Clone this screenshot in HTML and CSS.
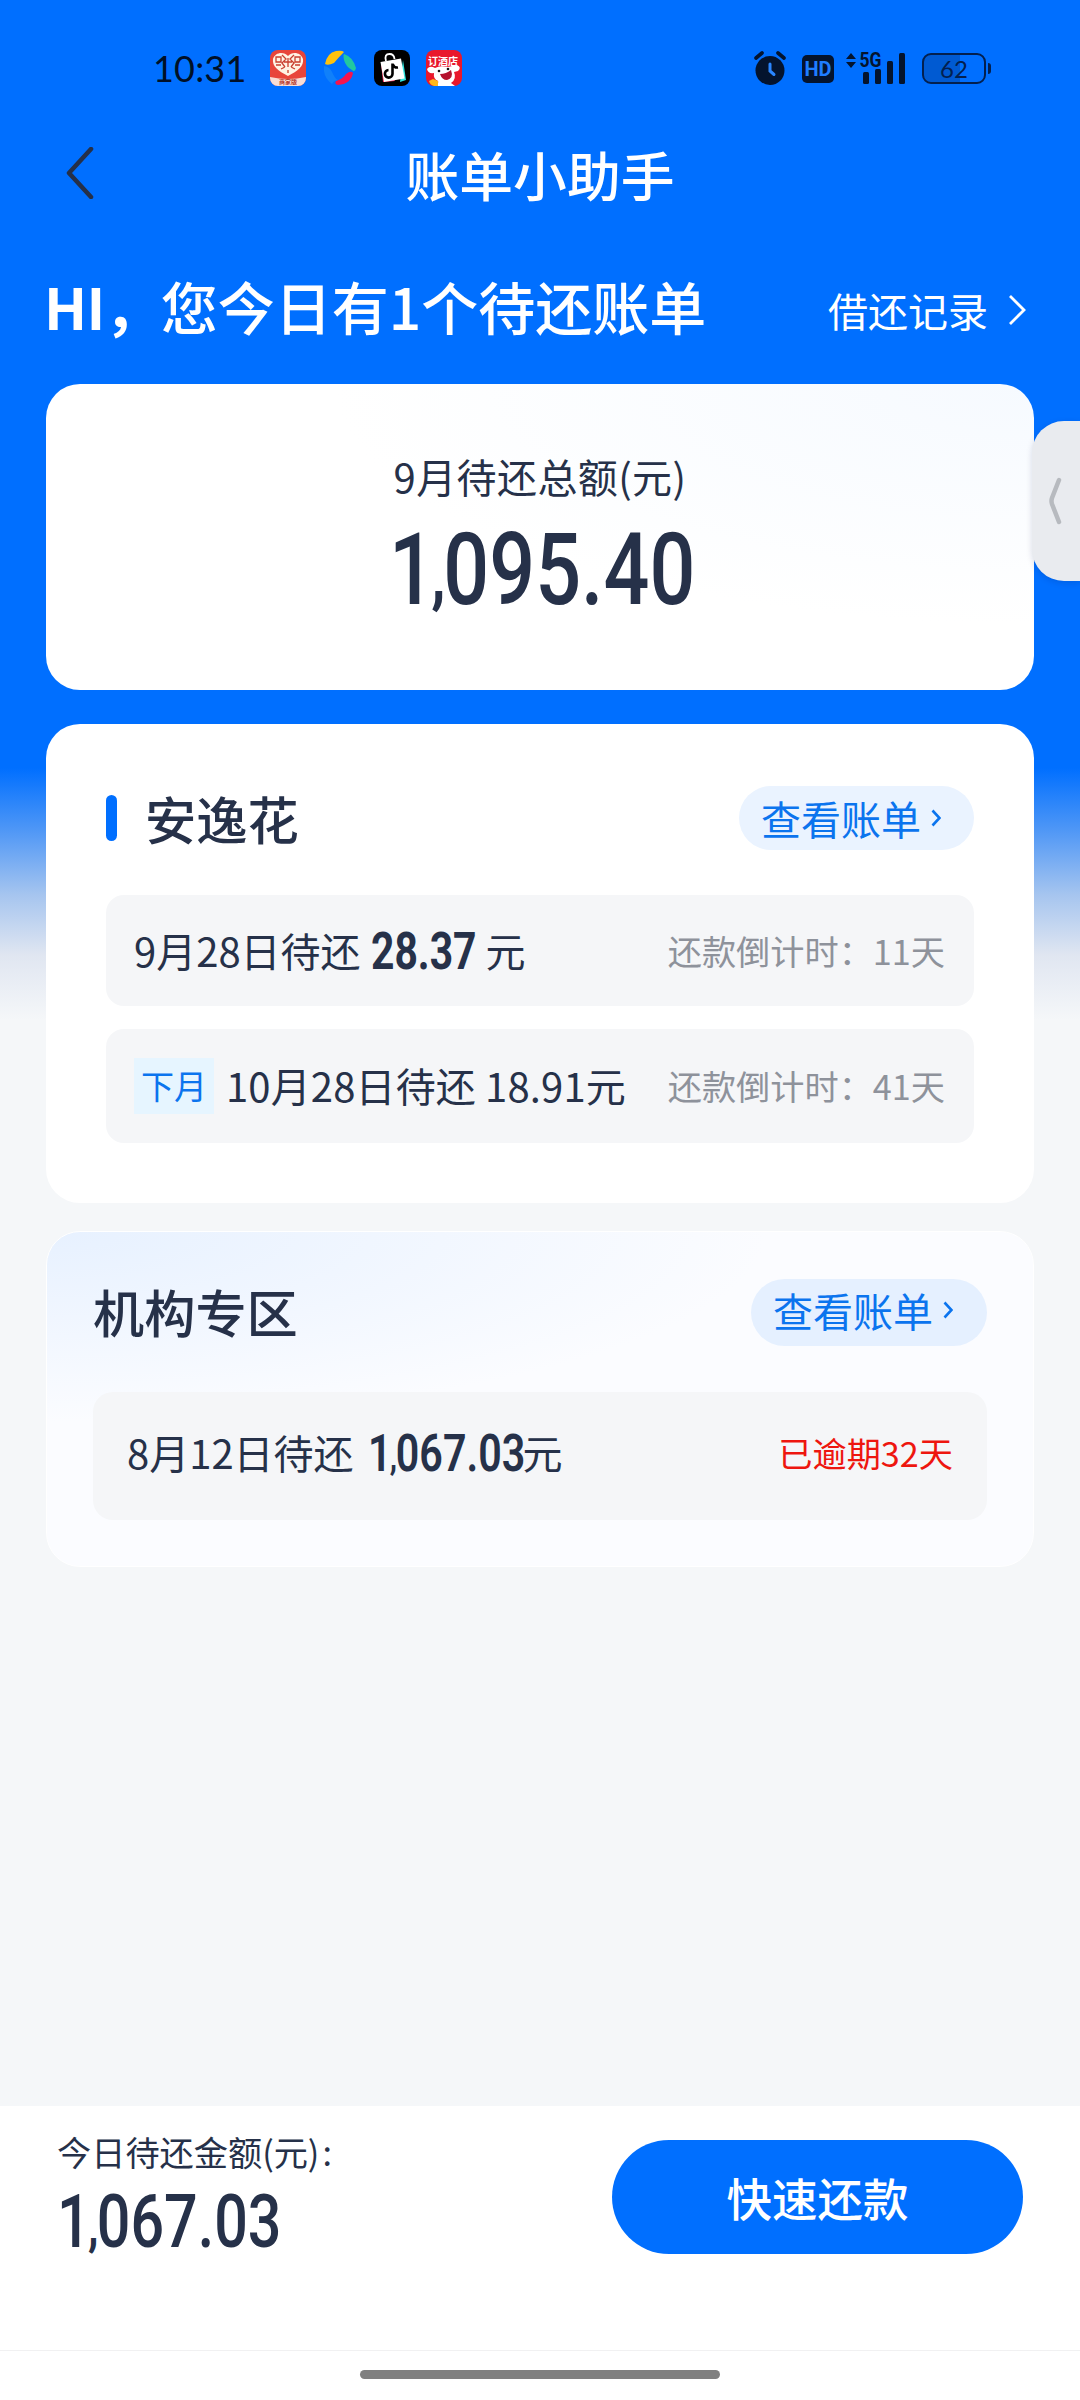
FILE: index.html
```html
<!DOCTYPE html>
<html lang="zh-CN">
<head>
<meta charset="utf-8">
<title>账单小助手</title>
<link rel="stylesheet" href="styles.css">
</head>
<body>
<div class="screen">
  <div class="status">
    <span class="time">10:31</span>
    <div class="apps">
      <svg class="app" viewBox="0 0 36 36"><rect width="36" height="36" rx="8" fill="#e8453a"/><path d="M18 26C8 21 2 16 3 9C5 2 14 1 18 6C22 1 31 2 33 9C34 16 28 21 18 26Z" fill="#fff3e4"/><path d="M6 7h5v5H6zM25 7h5v5h-5zM12 5l4 4-4 4 3 4M24 5l-4 4 4 4-3 4M14 12h8M18 8v9M6 15h5M25 15h5M11 19l4-2M25 19l-4-2M18 20v3" stroke="#c9402f" stroke-width="1.300" fill="none"/><path d="M0 27Q18 31 36 27V28a8 8 0 0 1-8 8H8a8 8 0 0 1-8-8Z" fill="#f8ddd5"/><text x="18" y="34.300" text-anchor="middle" font-size="6" font-weight="700" fill="#b43a30">商家版</text></svg>
      <svg class="app" viewBox="0 0 36 36"><path d="M3 14Q5 3 14 1Q20 0 22 2Q16 8 12 13Q6 16 3 14Z" fill="#ffc20e"/><path d="M22 4Q31 7 34 18Q33 23 30 20Q24 17 22 10Q21 5 22 4Z" fill="#22c8a0"/><path d="M31 23Q29 34 16 35Q12 34 14 31Q21 29 24 24Q29 20 31 23Z" fill="#f5144e"/><path d="M2 16Q8 17 10 22Q13 29 16 30Q11 31 10 34Q3 29 2 21Z" fill="#1080fa"/></svg>
      <svg class="app" viewBox="0 0 36 36"><rect width="36" height="36" rx="8" fill="#000"/><path d="M29 10l3 20-6 2z" fill="#2fe6e0"/><path d="M7 13l2 19 12-1z" fill="#ff2758"/><path d="M6.500 12L27 8.500L30.500 28.500L10 32Z" fill="#fff"/><path d="M12 11Q10 4 15.500 4Q20 4 20.500 9" fill="none" stroke="#fff" stroke-width="1.800"/><path d="M18.500 13.500V24a3.800 3.800 0 1 1-4-4M18.500 14Q20 18 24 17.500" fill="none" stroke="#000" stroke-width="2.600"/></svg>
      <svg class="app" viewBox="0 0 36 36"><rect width="36" height="36" rx="8" fill="#e9182c"/><text x="17" y="15" text-anchor="middle" font-size="10" font-weight="700" fill="#fff">订酒店</text><path d="M1 19Q4 15 9 18Q14 15 22 17L31 15Q36 17 32 21L28 22Q31 29 25 33L29 36H10Q13 33 12 31Q7 29 8 23Q2 24 1 19Z" fill="#fff"/><path d="M14 24Q20 24 25 20Q28 28 21 30Q16 30 14 24Z" fill="#b5122d"/><circle cx="22" cy="19" r="1.300" fill="#111"/><circle cx="13" cy="21" r="1.300" fill="#111"/><path d="M3 31l4-2 5 2v5H8Q4 35 3 31Z" fill="#ffb81c"/></svg>
    </div>
    <div class="system">
      <svg class="alarm" viewBox="0 0 32 34"><circle cx="16" cy="19.500" r="14.500" fill="#04142e"/><path d="M2 7L8 2M30 7L24 2" stroke="#04142e" stroke-width="3.600" stroke-linecap="round"/><path d="M16 13v7l4 3.500" fill="none" stroke="#2a86ff" stroke-width="3" stroke-linecap="round"/></svg>
      <span class="hd">HD</span>
      <svg class="signal" viewBox="0 0 60 34"><path d="M0 8L5 2L10 8ZM0 11H10L5 17Z" fill="#04142e"/><text x="13.500" y="15.500" font-size="20" font-weight="700" textLength="22" lengthAdjust="spacingAndGlyphs" fill="#04142e">5G</text><rect x="17" y="21" width="6" height="12" rx="1.500" fill="#04142e"/><rect x="29" y="18" width="6" height="15" rx="1.500" fill="#04142e"/><rect x="41" y="10" width="6" height="23" rx="1.500" fill="#04142e"/><rect x="53" y="2" width="6" height="31" rx="1.500" fill="#04142e"/></svg>
      <div class="battery"><span>62</span></div>
    </div>
  </div>

  <header class="nav">
    <svg class="back" viewBox="0 0 28 52"><path d="M25 2L3 26L25 50" fill="none" stroke="#253049" stroke-width="4.500" stroke-linecap="round" stroke-linejoin="round"/></svg>
    <h1>账单小助手</h1>
  </header>

  <div class="greeting">
    <h2><span class="hi">HI，</span>您今日有1个待还账单</h2>
    <a class="history">借还记录<svg viewBox="0 0 18 32"><path d="M2 2L16 16L2 30" fill="none" stroke="#fff" stroke-width="2.800"/></svg></a>
  </div>

  <main class="cards">
    <section class="card total">
      <div class="total-label">9月待还总额(元)</div>
      <div class="num num-xl"><span><i class="one">1</i><i class="comma">,</i>095.40</span></div>
    </section>

    <section class="card bills">
      <div class="card-head">
        <h3 class="marked">安逸花</h3>
        <a class="pill">查看账单<svg viewBox="0 0 10 18"><path d="M1.500 1.500L8.500 9L1.500 16.500" fill="none" stroke="#0b74ee" stroke-width="2.600"/></svg></a>
      </div>
      <div class="row row-a">
        <span class="due">9月28日待还</span><div class="num num-a"><span>28.37</span></div><span class="due">元</span>
        <span class="left">还款倒计时：11天</span>
      </div>
      <div class="row row-b">
        <span class="tag">下月</span><span class="due due-next">10月28日待还 18.91元</span>
        <span class="left">还款倒计时：41天</span>
      </div>
    </section>

    <section class="card org">
      <div class="card-head">
        <h3>机构专区</h3>
        <a class="pill pill-org">查看账单<svg viewBox="0 0 10 18"><path d="M1.500 1.500L8.500 9L1.500 16.500" fill="none" stroke="#0b74ee" stroke-width="2.600"/></svg></a>
      </div>
      <div class="row row-c">
        <span class="due">8月12日待还</span><div class="num num-c"><span><i class="one">1</i><i class="comma">,</i>067.03</span></div><span class="due">元</span>
        <span class="left overdue">已逾期32天</span>
      </div>
    </section>
  </main>

  <footer class="pay">
    <div class="pay-sum">
      <div class="pay-label">今日待还金额(元)<span>:</span></div>
      <div class="num num-l"><span><i class="one">1</i><i class="comma">,</i>067.03</span></div>
    </div>
    <button class="pay-btn">快速还款</button>
  </footer>
  <div class="home"><div class="home-bar"></div></div>

  <div class="edge-tab"><svg viewBox="0 0 14 48"><path d="M11 3L4 21Q3 24 4 27L11 45" fill="none" stroke="#b7babf" stroke-width="4.500" stroke-linecap="round"/></svg></div>
</div>
</body>
</html>
```
FILE: styles.css
```css
* { box-sizing: border-box; margin: 0; padding: 0; }
body { font-family: "Noto Sans CJK SC", "Noto Sans", sans-serif; color: #263149; background: #f5f7f9; }
h1, h2, h3 { font-weight: 500; }
i { font-style: normal; }
svg { display: block; flex: none; }
.screen {
  position: relative; width: 1080px; height: 2400px; overflow: hidden; display: flex; flex-direction: column;
  background: linear-gradient(#006fff 768px, #4f97f6 830px, #a6c5ef 895px, #e0e6f1 955px, #f5f7f9 1020px);
  white-space: nowrap;
}
.status { height: 122px; padding: 14px 94px 0 153px; display: flex; align-items: center; }
.time { width: 117px; font-family: Lato, sans-serif; font-size: 36px; line-height: 36px; letter-spacing: .2px; color: #001027; }
.apps { display: flex; gap: 16px; }
.app { width: 36px; height: 36px; }
.system { margin-left: auto; display: flex; align-items: center; }
.alarm { width: 32px; height: 34px; }
.hd { width: 32px; height: 28px; margin: 2px 12px 0 16px; border-radius: 5px; background: #04142e; color: #1f7dff; font: 700 20px/28px Roboto, sans-serif; text-align: center; }
.signal { width: 60px; height: 34px; margin-right: 16px; font-family: Roboto, sans-serif; overflow: visible; }
.battery { position: relative; width: 64px; height: 31px; border: 2.5px solid #03204f; border-radius: 9px; background: linear-gradient(90deg, #005ad2 60%, #006fff 60%); color: #03204f; font: 24px/27px Lato, sans-serif; text-align: center; }
.battery::after { content: ""; position: absolute; right: -7px; top: 8px; width: 3px; height: 11px; border-radius: 0 3px 3px 0; background: #03204f; }
.nav { height: 108px; padding: 0 66px; display: grid; grid-template-columns: 28px 1fr 28px; align-items: center; }
.back { width: 28px; height: 52px; margin-bottom: 6px; }
.nav h1 { padding-bottom: 4px; font-size: 53.8px; line-height: 60px; color: #fff; text-align: center; }
.greeting { height: 154px; padding: 0 54px 0 44px; display: flex; align-items: center; justify-content: space-between; color: #fff; }
.greeting h2 { padding-bottom: 4px; font-size: 57px; line-height: 80px; }
.hi { letter-spacing: -.7px; font-weight: 700; }
.history { display: flex; align-items: center; gap: 20px; font-size: 40px; line-height: 56px; padding-top: 5px; }
.history svg { width: 18px; height: 32px; }
.cards { padding: 0 46px; display: flex; flex-direction: column; }
.card { border-radius: 34px; background: #fff; }
.total { height: 306px; margin-bottom: 34px; padding-top: 64px; display: flex; flex-direction: column; align-items: center; background: radial-gradient(ellipse 700px 240px at 100% 0, #f6faff, #fff); }
.total-label { font-size: 40px; line-height: 56px; letter-spacing: .4px; }
.num { flex: none; font-family: Roboto, sans-serif; font-weight: 500; }
.num span { display: inline-block; transform-origin: 0 50%; transform: scaleX(.8); }
.one { letter-spacing: -.045em; }
.comma { font-size: .72em; font-weight: 700; line-height: 0; letter-spacing: -.04em; vertical-align: .06em; }
.num-xl { width: 302px; height: 96px; margin-top: 18px; font-size: 101px; line-height: 96px; }
.bills { height: 479px; margin-bottom: 28px; padding: 62px 60px 0; }
.card-head { display: flex; justify-content: space-between; align-items: center; height: 64px; }
.card-head h3 { font-size: 51.2px; line-height: 64px; }
.marked { display: flex; align-items: center; gap: 28px; }
.marked::before { content: ""; width: 11px; height: 46px; border-radius: 6px; background: #006fff; }
.pill { width: 235px; height: 64px; padding-left: 22px; border-radius: 32px; display: flex; align-items: center; gap: 10px; background: #eaf3ff; color: #0b74ee; font-size: 40px; line-height: 60px; }
.pill svg { width: 10px; height: 18px; }
.row { display: flex; align-items: center; border-radius: 18px; background: #f5f6f8; }
.due { padding-bottom: 2px; font-size: 40px; line-height: 56px; }
.due-next { letter-spacing: .15px; }
.left { margin-left: auto; padding-bottom: 2px; font-size: 34.2px; line-height: 48px; color: #8e929b; }
.row-a { height: 111px; margin: 45px 0 23px; padding: 0 29px 0 28px; }
.num-a { width: 105px; margin: 2px 10px 0; font-size: 51px; line-height: 56px; font-weight: 700; }
.row-b { height: 114px; padding: 0 29px 0 28px; }
.tag { width: 80px; height: 56px; margin-right: 12px; background: #e6f5ff; color: #0b74ee; font-size: 33px; line-height: 54px; text-align: center; }
.org { height: 336px; padding: 47px 46px 0 46px; border: 1px solid #fff; background: radial-gradient(ellipse 720px 190px at 0 0, #e7f1ff, #fbfcff); }
.org .card-head { height: 67px; }
.org h3 { padding-bottom: 4px; }
.pill-org { width: 236px; height: 67px; padding-bottom: 5px; border-radius: 34px; background: #e5f0ff; }
.row-c { height: 128px; margin-top: 46px; padding: 0 34px 6px 34px; border-radius: 20px; }
.num-c { width: 154px; margin: 2px 1px 0 14px; font-size: 51.5px; line-height: 56px; font-weight: 600; }
.left.overdue { color: #ee160f; }
.pay { margin-top: auto; height: 245px; padding: 20px 57px 0; background: #fff; display: flex; justify-content: space-between; align-items: flex-start; border-bottom: 1px solid #f1f1f2; }
.pay-label { font-size: 34.2px; line-height: 50px; }
.pay-label span { margin-left: 3px; }
.num-l { width: 220px; margin: 6px 0 0; font-size: 74px; line-height: 80px; }
.pay-btn { width: 411px; height: 114px; margin-top: 14px; border: 0; border-radius: 57px; background: #006fff; color: #fff; font: 500 45.500px/112px "Noto Sans CJK SC", sans-serif; }
.home { height: 49px; padding-top: 19px; background: #fff; }
.home-bar { width: 360px; height: 9px; margin: 0 auto; border-radius: 5px; background: #808080; }
.edge-tab { position: absolute; right: 0; top: 421px; width: 48px; height: 160px; border-radius: 32px 0 0 32px; background: #e9ebef; display: flex; align-items: center; padding-left: 16px; box-shadow: 0 2px 6px rgba(0,20,80,.15); }
.edge-tab svg { width: 14px; height: 48px; }
```
